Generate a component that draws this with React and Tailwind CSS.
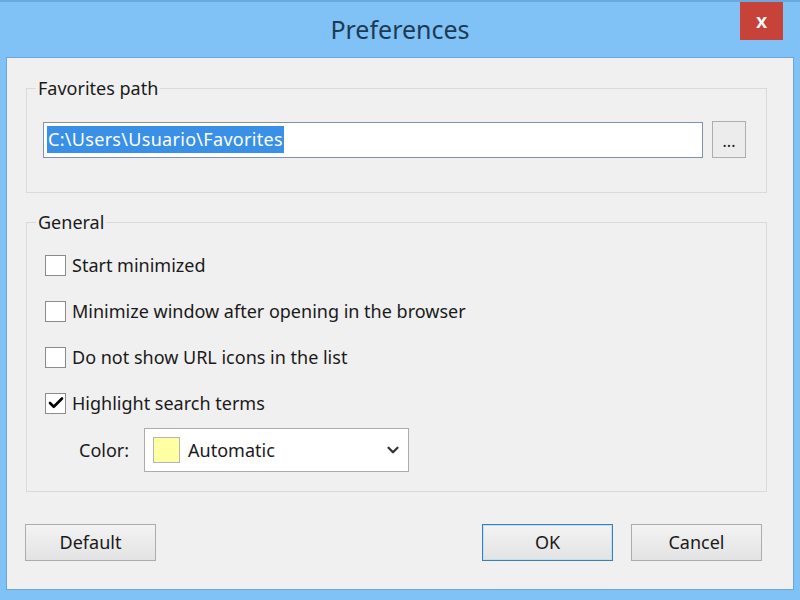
import { Check, ChevronDown } from "lucide-react";

function CheckRow({ label, checked }) {
  return (
    <div className="flex h-[46px] items-center">
      <span className="flex h-[21px] w-[21px] items-center justify-center border border-[#8c8c8c] bg-white">
        {checked && <Check size={18} strokeWidth={3.5} className="text-black" />}
      </span>
      <span className="ml-[6px] text-[18px] text-[#1a1a1a]">{label}</span>
    </div>
  );
}

function Button({ children, primary, className = "" }) {
  return (
    <button
      className={`h-[37px] w-[131px] border bg-gradient-to-b from-[#f3f3f3] to-[#e3e3e3] text-[18px] text-[#1a1a1a] ${
        primary ? "border-[#3c7fb1] shadow-[inset_0_0_0_1px_#bfe0f7]" : "border-[#acacac]"
      } ${className}`}
    >
      {children}
    </button>
  );
}

export default function App() {
  return (
    <div
      className="flex h-[600px] w-[800px] flex-col bg-[#80c1f6]"
      style={{ fontFamily: '"Noto Sans", "Open Sans", sans-serif' }}
    >
      <div className="relative flex h-[57px] shrink-0 items-center justify-center border-t-2 border-[#6aa9dc]">
        <span className="text-[25px] text-[#1d3a55]">Preferences</span>
        <div className="absolute right-[17px] top-0 flex h-[38px] w-[43px] items-center justify-center bg-[#c7433a] text-[20px] font-semibold text-white">
          x
        </div>
      </div>

      <div className="mx-[6px] flex flex-1 flex-col border border-[#6ea6d6] bg-[#f0f0f0]">
        <fieldset className="ml-[19px] mt-[18px] h-[117px] w-[741px] border border-[#dadada] px-[16px]">
          <legend className="-ml-[7px] px-[2px] text-[18px] leading-[24px] text-[#1a1a1a]">Favorites path</legend>
          <div className="mt-[21px] flex items-center">
            <div className="flex h-[36px] w-[660px] items-center border border-[#7d93ab] bg-white px-[3px]">
              <span className="bg-[#3990e6] px-[1px] text-[18px] leading-[27px] tracking-[0.3px] text-white">
                C:\Users\Usuario\Favorites
              </span>
            </div>
            <div className="ml-[9px] flex h-[37px] w-[34px] items-end justify-center border border-[#adadad] bg-[#ececec] pb-[8px] text-[16px] leading-none text-[#1a1a1a]">
              ...
            </div>
          </div>
        </fieldset>

        <fieldset className="ml-[19px] mt-[17px] h-[282px] w-[741px] border border-[#dadada] px-[18px]">
          <legend className="-ml-[9px] px-[2px] text-[18px] leading-[24px] text-[#1a1a1a]">General</legend>
          <div className="mt-[8px] flex flex-col">
            <CheckRow label="Start minimized" />
            <CheckRow label="Minimize window after opening in the browser" />
            <CheckRow label="Do not show URL icons in the list" />
            <CheckRow label="Highlight search terms" checked />
            <div className="mt-[2px] flex items-center pl-[34px]">
              <span className="text-[18px] text-[#1a1a1a]">Color:</span>
              <div className="ml-[15px] flex h-[44px] w-[265px] items-center border border-[#acacac] bg-white pl-[8px] pr-[6px]">
                <span className="h-[26px] w-[27px] border border-[#b4b4b4] bg-[#ffffa3]" />
                <span className="ml-[8px] flex-1 text-[18px] text-[#1a1a1a]">Automatic</span>
                <ChevronDown size={18} strokeWidth={3} className="text-[#333]" />
              </div>
            </div>
          </div>
        </fieldset>

        <div className="mt-[32px] flex items-center pl-[18px] pr-[31px]">
          <Button>Default</Button>
          <div className="flex-1" />
          <Button primary>OK</Button>
          <Button className="ml-[18px]">Cancel</Button>
        </div>
      </div>
      <div className="h-[10px] shrink-0" />
    </div>
  );
}
